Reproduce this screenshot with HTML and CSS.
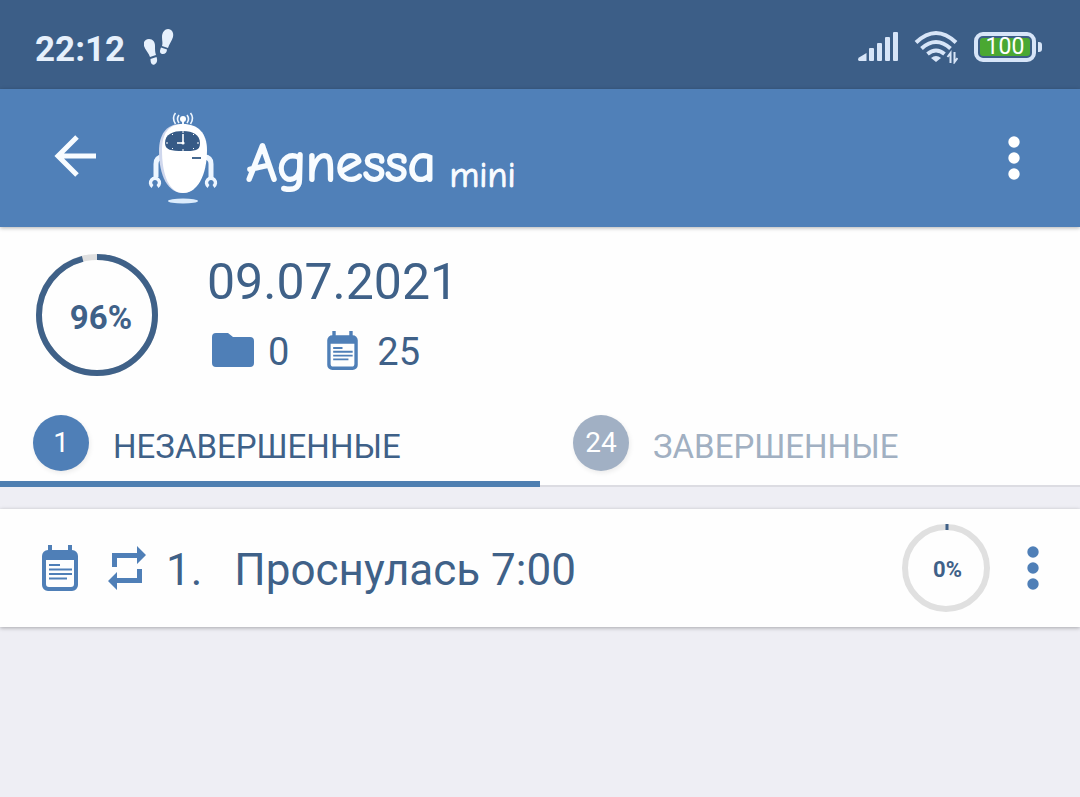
FILE: index.html
```html
<!DOCTYPE html>
<html lang="ru">

<head>
    <meta charset="UTF-8">
    <meta name="viewport" content="width=device-width, initial-scale=1.0">
    <title>Agnessa mini</title>
    <link rel="stylesheet" href="styles.css">
</head>

<body>
    <svg class="sprite" aria-hidden="true">
        <symbol id="note" viewBox="0 0 36 46">
            <path d="M6 5V0h4v5h16V0h4v5a6 6 0 0 1 6 6v29a6 6 0 0 1-6 6H6a6 6 0 0 1-6-6V11a6 6 0 0 1 6-6zM4 15v24a3 3 0 0 0 3 3h22a3 3 0 0 0 3-3V15z" fill="#4f7fb7" fill-rule="evenodd"/>
            <path d="M7 20h11M7 24.500h23M7 29h23M7 33.500h18" stroke="#4f7fb7" stroke-width="2.200"/>
        </symbol>
        <symbol id="dots" viewBox="0 0 12 44">
            <circle cx="6" cy="6" r="5.700"/>
            <circle cx="6" cy="22" r="5.700"/>
            <circle cx="6" cy="38" r="5.700"/>
        </symbol>
    </svg>

    <div class="status">
        <span class="status-time">22:12</span>
        <svg class="steps" viewBox="144 28 30 38" fill="#e6f0fc">
            <path d="M144 46c-1-4 1-7 5-7 4 0 6 3 6 7 0 4 0 6 1 9l-6 2c-1-4-5-7-6-11z"/>
            <path d="M150.500 59l6-2c1 3 1 6-2 7.500-3 1-4-2-4-5.500z"/>
            <path d="M162 37c0-5 3-8 6-8 4 0 6 4 5 8-1 4-4 7-5 11l-6-2c1-3 0-5 0-9z"/>
            <path d="M161 47.500l6 2c0 3-2 5-5 4.500-3-1-2-4-1-6.500z"/>
        </svg>
        <div class="status-icons">
            <svg class="signal" viewBox="859 32 40 30" fill="#d7e5f8">
                <path d="M867.500 53v8H860q-2-1.500 0-3.500z"/>
                <rect x="870" y="48" width="5" height="13" rx="1"/>
                <rect x="878" y="43" width="5" height="18" rx="1"/>
                <rect x="886" y="37" width="5" height="24" rx="1"/>
                <rect x="894" y="32" width="5" height="29" rx="1"/>
            </svg>
            <svg class="wifi" viewBox="914 31 44 34" fill="none" stroke="#d7e5f8" stroke-width="4">
                <path d="M916 43.500q20-19 40 0M921.500 49.500q14.500-13 29 0M927.500 55q8.500-7 17 0"/>
                <path d="M931 59q5-4 10 0l-5 4z" fill="#d7e5f8" stroke="none"/>
                <path d="M950.500 64V54l-3 4M954.500 53v10l3-4" stroke-width="2"/>
            </svg>
            <div class="battery"><span>100</span></div>
        </div>
    </div>

    <header class="header">
        <button class="back" aria-label="Назад">
            <svg width="42" height="42" viewBox="0 0 42 42" fill="none" stroke="#f8fcff" stroke-width="5">
                <path d="M23 2L4 21l19 19M4 21h38"/>
            </svg>
        </button>
        <svg class="robot" viewBox="148 111 70 94">
            <g fill="none" stroke="#eef6ff">
                <path d="M183 120v6" stroke-width="2"/>
                <path d="M179 115q-3 4 0 8M187 115q3 4 0 8M175.500 113q-4 5 0 11M190.500 113q4 5 0 11" stroke-width="1.600"/>
                <path d="M163 157q-7 0-7 7v13M204 157q7 0 7 7v13" stroke-width="5"/>
                <path d="M152.500 186.500a4.500 4.500 0 1 1 5 0M208.500 186.500a4.500 4.500 0 1 1 5 0" stroke-width="3.400"/>
            </g>
            <circle cx="183" cy="119" r="3" fill="#fff"/>
            <path d="M181 124c-15 0-22 11-22 27 0 25 9 42 24 42 5 0 8-2 11-4z" fill="#cfd7ed"/>
            <path d="M183 124c15 0 24 9 24 26 0 26-10 43-24 43s-21-18-21-43c0-17 7-26 21-26z" fill="#fff"/>
            <path d="M165 143c0-9 8-12 18-12s17 4 17 12-5 8-17 8-18-1-18-8z" fill="#365a86"/>
            <path d="M183 134v9h-6" fill="none" stroke="#fff" stroke-width="1.600"/>
            <circle cx="183" cy="143" r="1.600" fill="#fff"/>
            <path d="M183 131v2M183 149v2M166 143h2M197 143h2M172 134l1 1M194 134l-1 1M172 149l1-1M194 149l-1-1" stroke="#fff"/>
            <path d="M192 158h9" stroke="#45688f" stroke-width="2"/>
            <ellipse cx="183" cy="201" rx="15" ry="2.500" fill="#dcecfc"/>
        </svg>
        <h1 class="brand">Agnessa <small>mini</small></h1>
        <button class="menu menu-light" aria-label="Меню">
            <svg width="12" height="44"><use href="#dots"/></svg>
        </button>
    </header>

    <main>
        <section class="summary">
            <div class="ring">
                <svg viewBox="0 0 122 122" fill="none" stroke-width="6">
                    <circle cx="61" cy="61" r="58" stroke="#e0e0e0"/>
                    <circle cx="61" cy="61" r="58" stroke="#3f6188" pathLength="100" stroke-dasharray="96 4" transform="rotate(-90 61 61)"/>
                </svg>
                <span>96%</span>
            </div>
            <div class="summary-info">
                <h2>09.07.2021</h2>
                <div class="counts">
                    <svg width="42" height="34" viewBox="0 0 42 34">
                        <path d="M4 0h12l5 4h17a4 4 0 0 1 4 4v22a4 4 0 0 1-4 4H4a4 4 0 0 1-4-4V4a4 4 0 0 1 4-4z" fill="#4f7fb7"/>
                    </svg>
                    <span class="folders">0</span>
                    <svg width="31" height="39"><use href="#note"/></svg>
                    <span class="tasks">25</span>
                </div>
            </div>
        </section>

        <div class="tabs" role="tablist">
            <button class="tab active" role="tab" aria-selected="true">
                <span class="badge">1</span>
                <span class="tab-name">НЕЗАВЕРШЕННЫЕ</span>
            </button>
            <button class="tab" role="tab" aria-selected="false">
                <span class="badge">24</span>
                <span class="tab-name">ЗАВЕРШЕННЫЕ</span>
            </button>
        </div>

        <div class="task">
            <svg width="36" height="46"><use href="#note"/></svg>
            <svg class="repeat" width="38" height="42" viewBox="0 0 38 42" fill="#4f7fb7">
                <path d="M4 20V6h25V-1l9 9-9 9v-6H9v9zM34 22v14H9v7l-9-9 9-9v6h20v-9z"/>
            </svg>
            <span class="task-number">1.</span>
            <span class="task-name">Проснулась 7:00</span>
            <div class="ring ring-small">
                <svg viewBox="0 0 88 88" fill="none" stroke-width="6">
                    <circle cx="44" cy="44" r="41" stroke="#e0e0e0"/>
                    <path d="M45 0v6" stroke="#3f6188" stroke-width="3"/>
                </svg>
                <span>0%</span>
            </div>
            <button class="menu" aria-label="Действия">
                <svg width="12" height="44"><use href="#dots"/></svg>
            </button>
        </div>
    </main>
</body>

</html>
```
FILE: styles.css
```css
* {
    box-sizing: border-box;
}
body {
    min-height: 100vh;
    margin: 0;
    background: #eeeef4;
    color: #3f6188;
    font-family: Roboto, "Liberation Sans", sans-serif;
}
button {
    border: none;
    padding: 0;
    background: none;
    font-family: inherit;
    cursor: pointer;
}
svg {
    display: block;
    flex-shrink: 0;
}
.sprite {
    position: absolute;
    width: 0;
    height: 0;
}

.status {
    display: flex;
    align-items: center;
    padding: 28px 38px 19px 35px;
    background: #3c5e87;
    color: #e6f0fc;
}
.status-time {
    font-size: 35px;
    line-height: 41px;
    font-weight: bold;
}
.steps {
    width: 30px;
    height: 38px;
    margin: 0 0 4px 19px;
}
.status-icons {
    display: flex;
    align-items: center;
    gap: 16px;
    margin: 0 0 4px auto;
}
.signal {
    width: 40px;
    height: 30px;
}
.wifi {
    width: 44px;
    height: 34px;
}
.battery {
    position: relative;
    width: 62px;
    height: 30px;
    padding: 2px;
    border: 4px solid #d7e5f8;
    border-radius: 9px;
    margin-right: 6px;
}
.battery:after {
    content: "";
    position: absolute;
    top: 6px;
    right: -10px;
    width: 4px;
    height: 10px;
    border-radius: 0 3px 3px 0;
    background: #d7e5f8;
}
.battery span {
    display: block;
    border-radius: 3px;
    background: #4aa832;
    color: #fff;
    font-size: 23px;
    line-height: 18px;
    text-align: center;
}

.header {
    position: relative;
    display: flex;
    align-items: center;
    height: 138px;
    padding: 0 60px 0 54px;
    background: #5080b8;
    box-shadow: 0 1px 4px rgba(0, 0, 0, 0.3);
}
.back {
    padding-bottom: 4px;
}
.robot {
    width: 70px;
    height: 94px;
    margin-left: 52px;
}
.brand {
    display: flex;
    align-items: center;
    gap: 14px;
    margin: 12px 0 0 28px;
    color: #f8fcff;
    font-family: "Comic Neue", "Comic Sans MS", Lato, sans-serif;
    font-size: 54px;
    line-height: 64px;
    font-weight: 500;
    -webkit-text-stroke: 2px #f8fcff;
}
.brand small {
    padding-top: 24px;
    font-size: 36px;
    line-height: 40px;
    font-weight: 400;
    -webkit-text-stroke: 1px #f8fcff;
}
.menu {
    margin-left: auto;
    fill: #4f7fb7;
}
.menu-light {
    fill: #fff;
}

.summary {
    display: flex;
    gap: 49px;
    padding: 27px 36px 24px;
    background: #fefefe;
}
.ring {
    position: relative;
    display: flex;
    align-items: center;
    justify-content: center;
    width: 122px;
    height: 122px;
    font-size: 33px;
    font-weight: bold;
}
.ring svg {
    position: absolute;
    width: 100%;
    height: 100%;
}
.ring span {
    padding: 4px 0 0 8px;
}
.summary h2 {
    margin: 0;
    font-size: 50px;
    line-height: 56px;
    font-weight: 400;
}
.counts {
    display: flex;
    align-items: center;
    margin: 20px 0 0 5px;
    font-size: 38px;
    line-height: 44px;
}
.counts svg {
    margin-bottom: 4px;
}
.folders {
    margin: 0 38px 0 14px;
}
.tasks {
    margin-left: 19px;
}

.tabs {
    display: flex;
    background: #fefefe;
}
.tab {
    flex: 1;
    display: flex;
    align-items: center;
    height: 87px;
    padding: 2px 32px 0 33px;
    box-shadow: inset 0 -2px #dcdce2;
    color: #a1b0c2;
    font-size: 33px;
}
.tab.active {
    box-shadow: inset 0 -6px #4f7fb1;
    color: #3f6188;
}
.badge {
    width: 56px;
    height: 56px;
    border-radius: 50%;
    margin: 0 24px 4px 0;
    background: #a1b0c4;
    box-shadow: 1px 2px 5px rgba(0, 0, 0, 0.08);
    color: #fff;
    font-size: 28px;
    line-height: 56px;
}
.active .badge {
    background: #4f7fb7;
}
.tab-name {
    padding-top: 4px;
}

.task {
    display: flex;
    align-items: center;
    height: 118px;
    padding: 0 41px 0 42px;
    margin-top: 22px;
    background: #fefefe;
    box-shadow: 0 1px 4px rgba(0, 0, 0, 0.3);
    font-size: 44px;
    line-height: 52px;
}
.repeat {
    margin-left: 30px;
    overflow: visible;
}
.task-number {
    margin: 4px 32px 0 20px;
}
.task-name {
    padding-top: 4px;
}
.ring-small {
    width: 88px;
    height: 88px;
    margin-left: auto;
    font-size: 22px;
}
.ring-small span {
    padding: 4px 0 0 3px;
}
.ring-small + .menu {
    margin-left: 37px;
}
```
